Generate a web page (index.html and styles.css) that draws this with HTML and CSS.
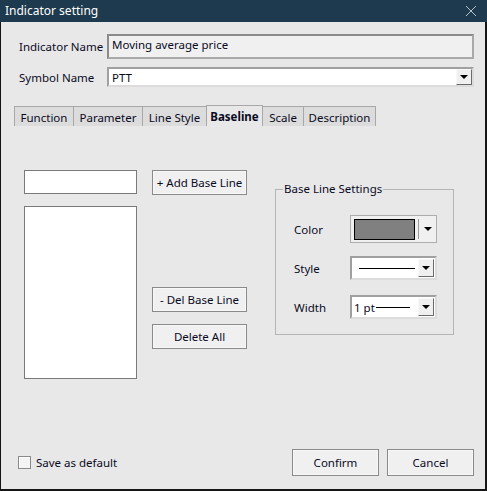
FILE: index.html
```html
<!DOCTYPE html>
<html>
<head>
<meta charset="utf-8">
<link rel="stylesheet" href="styles.css">
</head>
<body>
<div class="window">
  <div class="titlebar">
    <span class="title">Indicator setting</span>
    <svg class="close" width="12" height="12" viewBox="0 0 12 12"><path d="M1 1 L11 11 M11 1 L1 11" stroke="#b8c2ca" stroke-width="1" fill="none"/></svg>
  </div>
  <div class="body">
    <div class="row row-name">
      <span class="lbl">Indicator Name</span>
      <div class="field readonly">Moving average price</div>
    </div>
    <div class="row row-symbol">
      <span class="lbl">Symbol Name</span>
      <div class="select sym">
        <span class="sel-text">PTT</span>
        <span class="dd-btn"><i class="tri"></i></span>
      </div>
    </div>
    <div class="tabs">
      <div class="tab t-func">Function</div>
      <div class="tab t-param">Parameter</div>
      <div class="tab t-line">Line Style</div>
      <div class="tab t-base active">Baseline</div>
      <div class="tab t-scale">Scale</div>
      <div class="tab t-desc">Description</div>
    </div>
    <div class="panel">
      <div class="left-col">
        <div class="textbox"></div>
        <div class="listbox"></div>
      </div>
      <div class="btn-col">
        <div class="btn small">+ Add Base Line</div>
        <div class="btn small del">- Del Base Line</div>
        <div class="btn small delall">Delete All</div>
      </div>
      <div class="group">
        <span class="group-title">Base Line Settings</span>
        <div class="grow g-color">
          <span class="glbl">Color</span>
          <div class="combo color-combo">
            <span class="swatch"></span>
            <span class="sep"></span>
            <span class="arrow-plain"><i class="tri"></i></span>
          </div>
        </div>
        <div class="grow g-style">
          <span class="glbl">Style</span>
          <div class="select combo-sunken">
            <span class="line-sample long"></span>
            <span class="dd-btn"><i class="tri"></i></span>
          </div>
        </div>
        <div class="grow g-width">
          <span class="glbl">Width</span>
          <div class="select combo-sunken">
            <span class="pt">1 pt</span><span class="line-sample short"></span>
            <span class="dd-btn"><i class="tri"></i></span>
          </div>
        </div>
      </div>
    </div>
    <div class="footer">
      <label class="check"><span class="box"></span><span>Save as default</span></label>
      <div class="footer-btns">
        <div class="btn big">Confirm</div>
        <div class="btn big">Cancel</div>
      </div>
    </div>
  </div>
</div>
</body>
</html>
```
FILE: styles.css
```css
* { box-sizing: border-box; }
html, body { margin: 0; padding: 0; }
body {
  width: 487px;
  height: 491px;
  overflow: hidden;
  font-family: "Noto Sans", "Open Sans", sans-serif;
  font-size: 11.5px;
  color: #0a0a1e;
  background: #e8e8e8;
}
.window {
  width: 487px;
  height: 491px;
  display: flex;
  flex-direction: column;
}
.titlebar {
  height: 22px;
  background: #1e3a4e;
  display: flex;
  align-items: center;
  justify-content: space-between;
  padding: 0 10px 0 5px;
  flex: none;
}
.title {
  color: #ffffff;
  font-size: 12px;
  line-height: 22px;
}
.close { display: block; }
.body {
  flex: 1;
  display: flex;
  flex-direction: column;
  background: #e8e8e8;
  border-left: 1px solid #151515;
  border-right: 2px solid #151515;
  border-bottom: 2px solid #151515;
}
.row {
  display: flex;
  align-items: center;
  padding-left: 18px;
}
.lbl { width: 88px; flex: none; }
.row-name { margin-top: 12px; }
.row-symbol { margin-top: 8px; }
.field {
  width: 367px;
  height: 25px;
}
.readonly {
  background: #f0f0f0;
  border: 2px solid #8a8a8a;
  border-right-color: #a9a9a9;
  border-bottom-color: #a9a9a9;
  padding: 1px 0 0 3px;
  line-height: 16px;
}
.select {
  display: flex;
  align-items: center;
  background: #ffffff;
  border: 2px solid #a0a0a0;
  border-right-color: #dcdcdc;
  border-bottom-color: #dcdcdc;
  position: relative;
}
.sym {
  width: 367px;
  height: 20px;
  padding-left: 3px;
}
.sel-text { flex: 1; }
.dd-btn {
  width: 16px;
  height: 16px;
  background: #f0f0f0;
  border: 1px solid #f8f8f8;
  border-right-color: #6a6a6a;
  border-bottom-color: #6a6a6a;
  display: flex;
  align-items: center;
  justify-content: center;
  flex: none;
}
.tri {
  display: block;
  width: 0;
  height: 0;
  border-left: 4px solid transparent;
  border-right: 4px solid transparent;
  border-top: 4px solid #000;
}
.tabs {
  display: flex;
  align-items: flex-end;
  height: 21px;
  margin-top: 18px;
  padding-left: 13px;
}
.tab {
  height: 20px;
  background: #dcdcdc;
  border: 1px solid #a8a8a8;
  border-bottom: none;
  margin-right: -1px;
  text-align: center;
  line-height: 20px;
  padding-top: 1px;
}
.tab.active {
  height: 21px;
  background: #e8e8e8;
  font-weight: bold;
  position: relative;
  z-index: 1;
}
.t-func { width: 60px; }
.t-param { width: 70px; }
.t-line { width: 65px; }
.t-base { width: 57px; }
.t-scale { width: 42px; }
.t-desc { width: 73px; }
.panel {
  display: flex;
  align-items: flex-start;
  padding-top: 44px;
  padding-left: 23px;
}
.left-col { width: 113px; flex: none; }
.textbox {
  height: 24px;
  background: #ffffff;
  border: 1px solid #7a7a7a;
}
.listbox {
  margin-top: 12px;
  height: 173px;
  background: #ffffff;
  border: 1px solid #7a7a7a;
}
.btn-col {
  width: 95px;
  margin-left: 15px;
  flex: none;
  display: flex;
  flex-direction: column;
}
.btn {
  background: #f0f0f0;
  border: 1px solid #8a8a8a;
  box-shadow: inset 0 0 0 1px #f7f7f7;
  display: flex;
  align-items: center;
  justify-content: center;
  white-space: nowrap;
}
.btn.small { height: 25px; }
.btn.del { margin-top: 92px; }
.btn.delall { margin-top: 12px; }
.group {
  position: relative;
  width: 179px;
  height: 146px;
  margin-left: 28px;
  margin-top: 19px;
  border: 1px solid #b4b4b4;
  padding: 25px 0 0 18px;
}
.group-title {
  position: absolute;
  top: -9px;
  left: 7px;
  padding: 0 1px;
  background: #e8e8e8;
  line-height: 16px;
}
.grow {
  display: flex;
  align-items: center;
}
.glbl { width: 56px; flex: none; }
.g-style { margin-top: 13px; }
.g-width { margin-top: 15px; }
.combo {
  width: 87px;
  height: 28px;
  display: flex;
  align-items: center;
}
.color-combo {
  background: #f0f0f0;
  border: 1px solid #adadad;
  padding-left: 3px;
}
.swatch {
  width: 61px;
  height: 21px;
  background: #808080;
  border: 1px solid #000;
  flex: none;
}
.sep {
  width: 1px;
  height: 20px;
  background: #9a9a9a;
  margin-left: 3px;
  flex: none;
}
.arrow-plain {
  flex: 1;
  display: flex;
  justify-content: center;
}
.combo-sunken {
  width: 87px;
  height: 24px;
  padding-left: 5px;
}
.combo-sunken .dd-btn { margin-left: auto; margin-right: 1px; height: 18px; }
.line-sample {
  display: block;
  height: 1px;
  background: #000;
}
.line-sample.long { width: 56px; margin-left: 2px; }
.line-sample.short { width: 34px; margin-left: 1px; }
.pt { margin-left: -3px; }
.footer {
  margin-top: auto;
  margin-bottom: 13px;
  display: flex;
  align-items: center;
  justify-content: space-between;
  padding-left: 17px;
  padding-right: 11px;
}
.check {
  display: flex;
  align-items: center;
  gap: 5px;
}
.box {
  width: 13px;
  height: 13px;
  background: #f4f4f4;
  border: 1px solid #8a8a8a;
  box-shadow: inset 1px 1px 0 #ffffff;
}
.footer-btns {
  display: flex;
  gap: 8px;
}
.btn.big {
  width: 87px;
  height: 27px;
}
```
